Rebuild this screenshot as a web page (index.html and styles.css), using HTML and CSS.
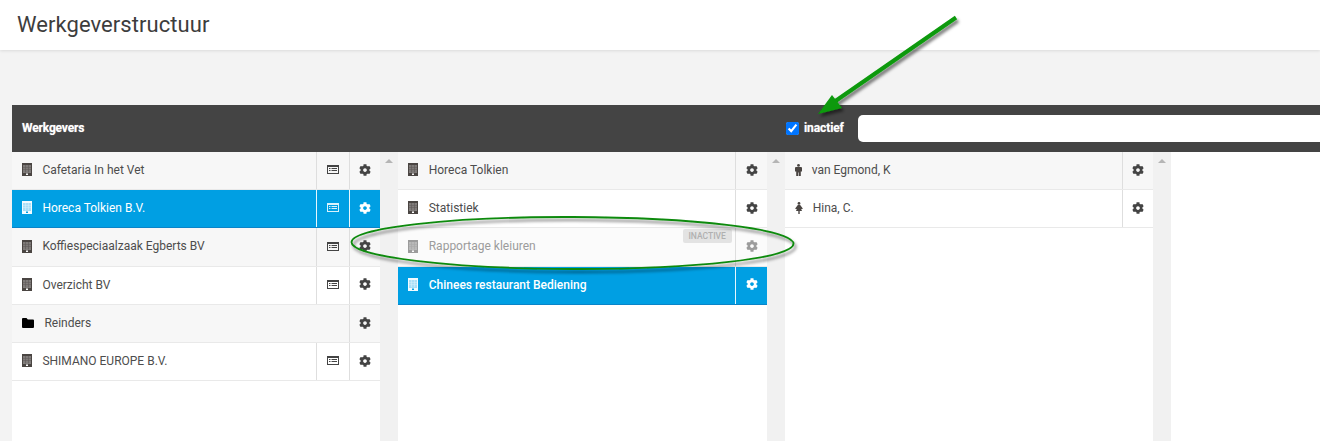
FILE: index.html
```html
<!DOCTYPE html>
<html lang="nl">
<head>
<meta charset="utf-8">
<title>Werkgeverstructuur</title>
<link rel="stylesheet" href="styles.css">
</head>
<body>
<svg class="defs" width="0" height="0">
  <symbol id="gear" viewBox="0 0 512 512"><path fill="currentColor" d="M487.4 315.7l-42.6-24.6c4.3-23.2 4.3-47 0-70.2l42.6-24.6c4.9-2.8 7.1-8.6 5.5-14-11.1-35.6-30-67.8-54.7-94.6-3.8-4.1-10-5.1-14.8-2.3L380.8 110c-17.9-15.4-38.5-27.3-60.8-35.1V25.8c0-5.6-3.9-10.5-9.4-11.7-36.7-8.2-74.3-7.8-109.2 0-5.5 1.2-9.4 6.1-9.4 11.7V75c-22.2 7.9-42.8 19.8-60.8 35.1L88.7 85.5c-4.9-2.8-11-1.9-14.8 2.3-24.7 26.7-43.6 58.9-54.7 94.6-1.7 5.4.6 11.2 5.5 14L67.3 221c-4.3 23.2-4.3 47 0 70.2l-42.6 24.6c-4.9 2.8-7.1 8.6-5.5 14 11.1 35.6 30 67.8 54.7 94.6 3.8 4.1 10 5.1 14.8 2.3l42.6-24.6c17.9 15.4 38.5 27.3 60.8 35.1v49.2c0 5.6 3.9 10.5 9.4 11.7 36.7 8.2 74.3 7.8 109.2 0 5.5-1.2 9.4-6.1 9.4-11.7v-49.2c22.2-7.9 42.8-19.8 60.8-35.1l42.6 24.6c4.9 2.8 11 1.9 14.8-2.3 24.7-26.7 43.6-58.9 54.7-94.6 1.5-5.5-.7-11.3-5.6-14.1zM256 336c-44.1 0-80-35.9-80-80s35.9-80 80-80 80 35.9 80 80-35.9 80-80 80z"/></symbol>
  <symbol id="building" viewBox="0 0 10 13">
    <path fill="currentColor" fill-rule="evenodd" d="M0 0h10v13H0zM1 2v7.500h8V2zM4 10.500V12h2v-1.500z"/>
    <path fill="currentColor" opacity=".7" d="M1 2h8v7.500H1z"/>
    <path fill="currentColor" opacity=".6" d="M3.200 2h.6v7.500h-.6zM6.200 2h.6v7.500h-.6zM1 4h8v.6H1zM1 6.500h8v.6H1z"/>
  </symbol>
  <symbol id="card" viewBox="0 0 12 9"><path fill="currentColor" fill-rule="evenodd" d="M0 0h12v9H0zM1 2v6h10V2zm1 1h1.500v1H2zm2.500 0h5.500v1H4.500zM2 5h1.500v1H2zm2.500 0h5.500v1H4.500z"/></symbol>
  <symbol id="folder" viewBox="0 0 12 10"><path fill="currentColor" d="M0 1q0-1 1-1h3.500l1.300 1.500H11q1 0 1 1V9q0 1-1 1H1q-1 0-1-1z"/></symbol>
  <symbol id="male" viewBox="0 0 7 12"><circle fill="currentColor" cx="3.500" cy="1.400" r="1.400"/><path fill="currentColor" d="M1 3h5q1 0 1 1v3.500H5.800V12H3.800V8.500h-.6V12H1.200V7.500H0V4q0-1 1-1z"/></symbol>
  <symbol id="female" viewBox="0 0 8 12"><circle fill="currentColor" cx="4" cy="1.400" r="1.400"/><path fill="currentColor" d="M2.800 3h2.400L8 6.800 6.200 7 7 9H5v3H4.300V9h-.6v3H3V9H1l.8-2L0 6.800z"/></symbol>
</svg>

<header class="page-header">
  <h1 class="page-title">Werkgeverstructuur</h1>
</header>

<main class="content">
  <section class="panel">
    <div class="toolbar">
      <span class="toolbar-title">Werkgevers</span>
      <label class="toggle"><input class="toggle-box" type="checkbox" checked><span class="toggle-text">inactief</span></label>
      <input class="search" type="text" aria-label="Zoeken">
    </div>
    <div class="columns">
      <div class="column">
        <div class="row"><svg class="icon building"><use href="#building"/></svg><span class="label">Cafetaria In het Vet</span><span class="action"><svg class="card"><use href="#card"/></svg></span><span class="action last"><svg class="gear"><use href="#gear"/></svg></span></div>
        <div class="row selected"><svg class="icon building"><use href="#building"/></svg><span class="label">Horeca Tolkien B.V.</span><span class="action"><svg class="card"><use href="#card"/></svg></span><span class="action last"><svg class="gear"><use href="#gear"/></svg></span></div>
        <div class="row"><svg class="icon building"><use href="#building"/></svg><span class="label">Koffiespeciaalzaak Egberts BV</span><span class="action"><svg class="card"><use href="#card"/></svg></span><span class="action last"><svg class="gear"><use href="#gear"/></svg></span></div>
        <div class="row"><svg class="icon building"><use href="#building"/></svg><span class="label">Overzicht BV</span><span class="action"><svg class="card"><use href="#card"/></svg></span><span class="action last"><svg class="gear"><use href="#gear"/></svg></span></div>
        <div class="row"><svg class="icon folder"><use href="#folder"/></svg><span class="label">Reinders</span><span class="action last"><svg class="gear"><use href="#gear"/></svg></span></div>
        <div class="row"><svg class="icon building"><use href="#building"/></svg><span class="label">SHIMANO EUROPE B.V.</span><span class="action"><svg class="card"><use href="#card"/></svg></span><span class="action last"><svg class="gear"><use href="#gear"/></svg></span></div>
      </div>
      <div class="scrollbar"><span class="scroll-up"></span></div>
      <div class="column">
        <div class="row"><svg class="icon building"><use href="#building"/></svg><span class="label">Horeca Tolkien</span><span class="action last"><svg class="gear"><use href="#gear"/></svg></span></div>
        <div class="row"><svg class="icon building"><use href="#building"/></svg><span class="label">Statistiek</span><span class="action last"><svg class="gear"><use href="#gear"/></svg></span></div>
        <div class="row inactive"><svg class="icon building"><use href="#building"/></svg><span class="label">Rapportage kleiuren</span><span class="badge">INACTIVE</span><span class="action last"><svg class="gear"><use href="#gear"/></svg></span></div>
        <div class="row selected"><svg class="icon building"><use href="#building"/></svg><span class="label strong">Chinees restaurant Bediening</span><span class="action last"><svg class="gear"><use href="#gear"/></svg></span></div>
      </div>
      <div class="scrollbar"><span class="scroll-up"></span></div>
      <div class="column">
        <div class="row"><svg class="icon male"><use href="#male"/></svg><span class="label">van Egmond, K</span><span class="action last"><svg class="gear"><use href="#gear"/></svg></span></div>
        <div class="row"><svg class="icon female"><use href="#female"/></svg><span class="label">Hina, C.</span><span class="action last"><svg class="gear"><use href="#gear"/></svg></span></div>
      </div>
      <div class="scrollbar"><span class="scroll-up"></span></div>
      <div class="rest"></div>
    </div>
  </section>
</main>

<svg class="annotation" viewBox="0 0 1320 441">
  <defs>
    <filter id="soft" x="-10%" y="-30%" width="120%" height="170%">
      <feDropShadow dx="2" dy="3" stdDeviation="1.800" flood-color="#000" flood-opacity=".5"/>
    </filter>
  </defs>
  <g filter="url(#soft)">
    <ellipse cx="572.500" cy="243" rx="221" ry="26" fill="none" stroke="#0d8a0d" stroke-width="1.800" transform="rotate(.2 572.500 243)"/>
  </g>
  <g filter="url(#soft)">
    <line x1="956" y1="17.500" x2="834" y2="102" stroke="#089908" stroke-width="4"/>
    <polygon points="818,114 832,95 842,108" fill="#089908"/>
  </g>
</svg>
</body>
</html>
```

FILE: styles.css
```css
* { box-sizing: border-box; }
html, body { margin: 0; height: 441px; overflow: hidden; }
body {
  position: relative;
  display: flex;
  flex-direction: column;
  background: #f3f3f3;
  font-family: Roboto, "Liberation Sans", sans-serif;
  color: #4d4d4d;
}
.defs { position: absolute; }

.page-header {
  height: 50px;
  flex: none;
  padding-left: 17px;
  background: #fff;
  box-shadow: 0 1px 3px rgba(0, 0, 0, .1);
}
.page-title {
  margin: 0;
  font-size: 22px;
  font-weight: 400;
  letter-spacing: .06px;
  line-height: 50px;
  color: #3d3d3d;
}

.content {
  flex: 1;
  min-height: 0;
  padding: 55px 0 0 12px;
}
.panel { height: 100%; display: flex; flex-direction: column; }

.toolbar {
  flex: none;
  height: 47px;
  display: flex;
  align-items: center;
  padding-left: 10px;
  background: #444;
  color: #fff;
  font-size: 12px;
  font-weight: 700;
  text-shadow: 0 0 1px rgba(255, 255, 255, .6);
}
.toolbar-title { flex: none; width: 764px; padding-bottom: 2px; letter-spacing: -.15px; }
.toggle { flex: none; width: 72px; display: flex; align-items: center; gap: 5px; }
.toggle-text { letter-spacing: -.1px; padding-bottom: 1px; }
.toggle-box { width: 13px; height: 13px; margin: 0; accent-color: #0075ff; }
.search {
  flex: 1;
  height: 27px;
  margin-right: -8px;
  border: 0;
  border-radius: 5px;
  background: #fff;
}

.columns { flex: 1; min-height: 0; display: flex; }
.column { flex: none; width: 368.330px; background: #fff; }
.scrollbar { flex: none; width: 18px; padding-top: 7px; display: flex; justify-content: center; align-items: flex-start; background: #f1f1f1; }
.scroll-up {
  width: 0;
  height: 0;
  border-left: 4px solid transparent;
  border-right: 4px solid transparent;
  border-bottom: 4px solid #b5b5b5;
}
.rest { flex: 1; background: #fff; }

.row {
  position: relative;
  height: 38.200px;
  display: flex;
  align-items: center;
  padding-left: 10px;
  background: #fff;
  border-bottom: 1px solid #e9e9e9;
  font-size: 12px;
}
.row:nth-child(odd) { background: #f7f7f7; }
.label { flex: 1; min-width: 0; margin-bottom: 1px; }
.icon { flex: none; margin: 0 10.400px 1.600px 0; color: #4a4542; }
.building { width: 10px; height: 13px; }
.folder { width: 12px; height: 10px; color: #000; }
.male { width: 7px; height: 12px; margin-right: 10px; }
.female { width: 8px; height: 12px; margin-right: 10px; }
.action {
  flex: none;
  width: 33px;
  height: 100%;
  padding-bottom: 1.600px;
  display: flex;
  align-items: center;
  justify-content: center;
  border-left: 1px solid #dedede;
  color: #444;
}
.action.last { width: 31.400px; padding-left: .5px; }
.gear { width: 12px; height: 12px; }
.card { width: 12px; height: 9px; }

.row.selected, .row.selected:nth-child(odd) {
  background: #009fe3;
  border-bottom-color: #0a84c8;
  color: #fff;
}
.row.selected .icon { color: #f2fbff; }
.row.selected .action { border-left-color: #e6f6fd; color: #fff; }
.row.selected .card { color: #d9f2fc; }
.strong { font-weight: 500; }

.row.inactive, .row.inactive:nth-child(odd) { background: #fbfbfb; color: #9c9c9c; }
.row.inactive .icon, .row.inactive .action { color: #9c9c9c; }
.badge {
  position: absolute;
  top: 1px;
  right: 35px;
  width: 49px;
  height: 14px;
  border-radius: 2px;
  background: #e3e3e3;
  color: #b0b0b0;
  font-size: 8.500px;
  font-weight: 500;
  line-height: 14px;
  text-align: center;
}

.annotation {
  position: absolute;
  left: 0;
  top: 0;
  width: 1320px;
  height: 441px;
  pointer-events: none;
}
```
